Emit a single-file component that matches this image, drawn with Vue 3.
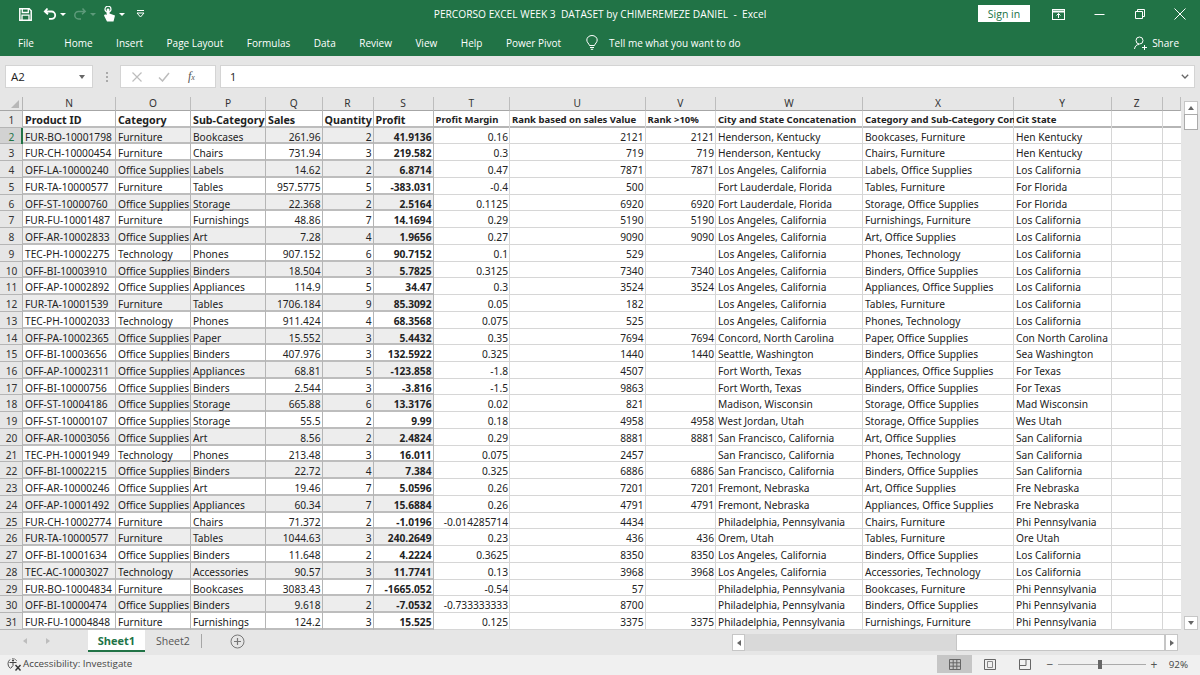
<script setup>
const tabs = ['Home','Insert','Page Layout','Formulas','Data','Review','View','Help','Power Pivot']
const letters = ['N','O','P','Q','R','S','T','U','V','W','X','Y','Z','']
const OS = 'Office Supplies', F = 'Furniture', T = 'Technology'
const H = 'Henderson, Kentucky', FL = 'Fort Lauderdale, Florida', LA = 'Los Angeles, California', FW = 'Fort Worth, Texas', SF = 'San Francisco, California', FR = 'Fremont, Nebraska', PH = 'Philadelphia, Pennsylvania'
const rows = [
['FUR-BO-10001798',F,'Bookcases','261.96','2','41.9136','0.16','2121','2121',H,'Bookcases, Furniture','Hen Kentucky'],
['FUR-CH-10000454',F,'Chairs','731.94','3','219.582','0.3','719','719',H,'Chairs, Furniture','Hen Kentucky'],
['OFF-LA-10000240',OS,'Labels','14.62','2','6.8714','0.47','7871','7871',LA,'Labels, Office Supplies','Los California'],
['FUR-TA-10000577',F,'Tables','957.5775','5','-383.031','-0.4','500','',FL,'Tables, Furniture','For Florida'],
['OFF-ST-10000760',OS,'Storage','22.368','2','2.5164','0.1125','6920','6920',FL,'Storage, Office Supplies','For Florida'],
['FUR-FU-10001487',F,'Furnishings','48.86','7','14.1694','0.29','5190','5190',LA,'Furnishings, Furniture','Los California'],
['OFF-AR-10002833',OS,'Art','7.28','4','1.9656','0.27','9090','9090',LA,'Art, Office Supplies','Los California'],
['TEC-PH-10002275',T,'Phones','907.152','6','90.7152','0.1','529','',LA,'Phones, Technology','Los California'],
['OFF-BI-10003910',OS,'Binders','18.504','3','5.7825','0.3125','7340','7340',LA,'Binders, Office Supplies','Los California'],
['OFF-AP-10002892',OS,'Appliances','114.9','5','34.47','0.3','3524','3524',LA,'Appliances, Office Supplies','Los California'],
['FUR-TA-10001539',F,'Tables','1706.184','9','85.3092','0.05','182','',LA,'Tables, Furniture','Los California'],
['TEC-PH-10002033',T,'Phones','911.424','4','68.3568','0.075','525','',LA,'Phones, Technology','Los California'],
['OFF-PA-10002365',OS,'Paper','15.552','3','5.4432','0.35','7694','7694','Concord, North Carolina','Paper, Office Supplies','Con North Carolina'],
['OFF-BI-10003656',OS,'Binders','407.976','3','132.5922','0.325','1440','1440','Seattle, Washington','Binders, Office Supplies','Sea Washington'],
['OFF-AP-10002311',OS,'Appliances','68.81','5','-123.858','-1.8','4507','',FW,'Appliances, Office Supplies','For Texas'],
['OFF-BI-10000756',OS,'Binders','2.544','3','-3.816','-1.5','9863','',FW,'Binders, Office Supplies','For Texas'],
['OFF-ST-10004186',OS,'Storage','665.88','6','13.3176','0.02','821','','Madison, Wisconsin','Storage, Office Supplies','Mad Wisconsin'],
['OFF-ST-10000107',OS,'Storage','55.5','2','9.99','0.18','4958','4958','West Jordan, Utah','Storage, Office Supplies','Wes Utah'],
['OFF-AR-10003056',OS,'Art','8.56','2','2.4824','0.29','8881','8881',SF,'Art, Office Supplies','San California'],
['TEC-PH-10001949',T,'Phones','213.48','3','16.011','0.075','2457','',SF,'Phones, Technology','San California'],
['OFF-BI-10002215',OS,'Binders','22.72','4','7.384','0.325','6886','6886',SF,'Binders, Office Supplies','San California'],
['OFF-AR-10000246',OS,'Art','19.46','7','5.0596','0.26','7201','7201',FR,'Art, Office Supplies','Fre Nebraska'],
['OFF-AP-10001492',OS,'Appliances','60.34','7','15.6884','0.26','4791','4791',FR,'Appliances, Office Supplies','Fre Nebraska'],
['FUR-CH-10002774',F,'Chairs','71.372','2','-1.0196','-0.014285714','4434','',PH,'Chairs, Furniture','Phi Pennsylvania'],
['FUR-TA-10000577',F,'Tables','1044.63','3','240.2649','0.23','436','436','Orem, Utah','Tables, Furniture','Ore Utah'],
['OFF-BI-10001634',OS,'Binders','11.648','2','4.2224','0.3625','8350','8350',LA,'Binders, Office Supplies','Los California'],
['TEC-AC-10003027',T,'Accessories','90.57','3','11.7741','0.13','3968','3968',LA,'Accessories, Technology','Los California'],
['FUR-BO-10004834',F,'Bookcases','3083.43','7','-1665.052','-0.54','57','',PH,'Bookcases, Furniture','Phi Pennsylvania'],
['OFF-BI-10000474',OS,'Binders','9.618','2','-7.0532','-0.733333333','8700','',PH,'Binders, Office Supplies','Phi Pennsylvania'],
['FUR-FU-10004848',F,'Furnishings','124.2','3','15.525','0.125','3375','3375',PH,'Furnishings, Furniture','Phi Pennsylvania'],
]
const heads = ['Product ID','Category','Sub-Category','Sales','Quantity','Profit','Profit Margin','Rank based on sales Value','Rank >10%','City and State Concatenation','Category and Sub-Category Concatenation','Cit State']
const isNum = i => i >= 3 && i <= 8
const cellClass = (r, i) => ({
  num: isNum(i),
  band: r % 2 === 0 && i < 6,
  dark: i < 6,
  strong: i === 5,
})
</script>

<template>
  <div class="app">
    <header class="titlebar">
      <div class="qat">
        <svg width="13" height="13" viewBox="0 0 13 13" class="q1"><path d="M.8.800h9.400l2 2v9.400H.800z" fill="none" stroke="#fff" stroke-width="1.500"/><path d="M3.300 1v3.500h6V1" fill="none" stroke="#fff" stroke-width="1.300"/><path d="M3 12V7.200h7V12" fill="none" stroke="#fff" stroke-width="1.300"/></svg>
        <svg width="14" height="14" viewBox="0 0 14 14" class="q2"><path d="M4.500 1.500L1.800 4.500 5 7.300M2 4.500h6.500a3.600 3.600 0 0 1 0 7.400H6" fill="none" stroke="#fff" stroke-width="1.800"/></svg>
        <span class="caret"></span>
        <svg width="14" height="14" viewBox="0 0 14 14" class="q3"><path d="M9.500 1.500l2.700 3L9 7.300M12 4.500H5.500a3.600 3.600 0 0 0 0 7.400H8" fill="none" stroke="#5d9a7a" stroke-width="1.500"/></svg>
        <span class="caret dim"></span>
        <svg width="13" height="17" viewBox="0 0 13 17" class="q4"><circle cx="5" cy="3.200" r="3" fill="none" stroke="#fff" stroke-width="1.200"/><path d="M3.600 4v5L2 8.200 1 9.500 4 15.500h6.500L12 9.500 6.500 7.500V4a1.450 1.450 0 0 0-2.900 0z" fill="#fff"/></svg>
        <span class="caret"></span>
        <svg width="9" height="8" viewBox="0 0 9 8" class="q5"><path d="M1 .5h7M1 3l3.500 4L8 3z" fill="none" stroke="#fff"/></svg>
      </div>
      <div class="title">PERCORSO EXCEL WEEK 3&nbsp; DATASET by CHIMEREMEZE DANIEL&nbsp; -&nbsp; Excel</div>
      <div class="winctl">
        <button class="signin">Sign in</button>
        <svg width="13" height="11" viewBox="0 0 13 11" class="w1"><rect x=".5" y=".5" width="12" height="10" fill="none" stroke="#fff"/><path d="M.5 2.500h12" stroke="#fff" stroke-width="2"/><path d="M6.500 9V4.500M4.500 6.500l2-2 2 2" stroke="#fff" fill="none"/></svg>
        <svg width="11" height="10" viewBox="0 0 11 10" class="w2"><path d="M.5 5.500h10" stroke="#fff"/></svg>
        <svg width="10" height="10" viewBox="0 0 10 10" class="w3"><path d="M2.500 2.500V.5h7v7h-2M.5 2.500h7v7h-7z" fill="none" stroke="#fff"/></svg>
        <svg width="12" height="12" viewBox="0 0 12 12" class="w4"><path d="M.5.500l11 11M11.500.500l-11 11" stroke="#fff"/></svg>
      </div>
    </header>

    <nav class="ribbon">
      <span class="file">File</span>
      <span v-for="t in tabs" :key="t" class="tab">{{ t }}</span>
      <svg width="12" height="15" viewBox="0 0 12 15" class="bulb"><path d="M3.500 10.500C3 8.500.8 7.500.8 5a5.200 4.500 0 0 1 10.400 0c0 2.500-2.200 3.500-2.700 5.500zM4 12.500h4M4.800 14.300h2.400" fill="none" stroke="#fff"/></svg>
      <span class="tell">Tell me what you want to do</span>
      <span class="grow"></span>
      <svg width="13" height="14" viewBox="0 0 13 14" class="shareicon"><circle cx="5.500" cy="4.500" r="3.500" fill="none" stroke="#fff"/><path d="M.5 13c.5-3 2-4.500 4.500-4.500M8 11.500h5M10.500 9v5" fill="none" stroke="#fff"/></svg>
      <span class="share">Share</span>
    </nav>

    <section class="formula">
      <div class="namebox"><span>A2</span><i class="ddown"></i></div>
      <div class="dots"><b></b><b></b><b></b></div>
      <div class="fbtns">
        <svg width="10" height="10" viewBox="0 0 10 10"><path d="M.5.500l9 9M9.500.500l-9 9" stroke="#bdbdbd" stroke-width="1.200"/></svg>
        <svg width="12" height="10" viewBox="0 0 12 10"><path d="M1 5.500l3.500 3.500L11 1" fill="none" stroke="#bdbdbd" stroke-width="1.500"/></svg>
        <span class="fx">f<sub>x</sub></span>
      </div>
      <div class="finput"><span>1</span><svg width="8" height="5" viewBox="0 0 8 5"><path d="M.8.800L4 4 7.200.800" fill="none" stroke="#666" stroke-width="1.300"/></svg></div>
    </section>

    <section class="sheet">
      <div class="grid">
        <div class="corner"><i></i></div>
        <div v-for="l in letters" :key="'h' + l" class="colhead">{{ l }}</div>

        <div class="rowhead">1</div>
        <div v-for="(h, i) in heads" :key="'t' + i" class="cell headcell" :class="{ dark: i < 6, big: i < 6 }">{{ h }}</div>
        <div class="cell headcell"></div>
        <div class="cell headcell last"></div>

        <template v-for="(row, r) in rows" :key="r">
          <div class="rowhead" :class="{ active: r === 0 }">{{ r + 2 }}</div>
          <div v-for="(c, i) in row" :key="i" class="cell" :class="cellClass(r, i)">{{ c }}</div>
          <div class="cell"></div>
          <div class="cell last"></div>
        </template>
      </div>
      <div class="vscroll">
        <div class="sbtn"><i class="up"></i></div>
        <div class="thumb"></div>
        <div class="track"></div>
        <div class="sbtn"><i class="down"></i></div>
      </div>
    </section>

    <section class="tabsbar">
      <div class="navarrows"><i class="l"></i><i class="r"></i></div>
      <div class="stab active">Sheet1</div>
      <div class="stab">Sheet2</div>
      <div class="sep"></div>
      <div class="plus"><svg width="15" height="15" viewBox="0 0 15 15"><circle cx="7.500" cy="7.500" r="6.500" fill="none" stroke="#777"/><path d="M7.500 4v7M4 7.500h7" stroke="#777" stroke-width="1.200"/></svg></div>
      <span class="grow"></span>
      <div class="hscroll">
        <div class="hbtn wide"><i class="l2"></i></div>
        <div class="htrack"></div>
        <div class="hthumb"></div>
        <div class="hbtn wide"><i class="r2"></i></div>
      </div>
    </section>

    <footer class="status">
      <svg width="16" height="15" viewBox="0 0 16 15" class="acc"><path d="M4 2.500A5.500 5.500 0 0 0 4 11" fill="none" stroke="#555"/><path d="M6 1.500A5.500 5.500 0 0 1 11 4" fill="none" stroke="#888"/><circle cx="7" cy="3.500" r="1.100" fill="#444"/><path d="M3.500 5.500h7M7 5.500v3M7 8.500l-2.500 3" fill="none" stroke="#444"/><path d="M9.500 8l5 5.500M14.500 8l-5 5.500" stroke="#333" stroke-width="1.400"/></svg>
      <span class="acctxt">Accessibility: Investigate</span>
      <span class="grow"></span>
      <div class="view on"><svg width="12" height="11" viewBox="0 0 12 11"><path d="M.5.500h11v10H.500zM.5 3.800h11M.5 7.200h11M4.200.500v10M7.800.500v10" fill="none" stroke="#666"/></svg></div>
      <div class="view"><svg width="12" height="11" viewBox="0 0 12 11"><path d="M.5.500h11v10H.500z" fill="none" stroke="#666"/><path d="M3.500 2.500h5v6h-5z" fill="none" stroke="#888"/></svg></div>
      <div class="view"><svg width="12" height="11" viewBox="0 0 12 11"><path d="M.5.500h11v10H.500zM.5 6.500h6.500V.500" fill="none" stroke="#666"/></svg></div>
      <div class="zoombar">
        <span class="zsign">−</span>
        <div class="slider"><i></i></div>
        <span class="zsign">+</span>
      </div>
      <span class="pct">92%</span>
    </footer>
  </div>
</template>

<style scoped>
.app { width: 1200px; height: 675px; display: flex; flex-direction: column; overflow: hidden; background: #e6e6e6; font-family: "Open Sans", "Noto Sans", sans-serif; color: #222; }
.grow { flex: 1; }
.titlebar { height: 28px; background: #217346; color: #fff; display: grid; grid-template-columns: 1fr auto 1fr; align-items: center; }
.qat { display: flex; align-items: center; }
.q1 { margin-left: 19px; }
.q2 { margin-left: 11px; }
.caret { width: 0; height: 0; flex: none; border: 3px solid transparent; border-top-color: #fff; border-bottom: 0; margin-left: 3px; }
.caret.dim { border-top-color: #5d9a7a; }
.q3 { margin-left: 7px; }
.q4 { margin-left: 7px; }
.q5 { margin-left: 11px; }
.title { font-size: 10.2px; white-space: nowrap; }
.winctl { display: flex; align-items: center; justify-content: flex-end; }
.signin { width: 52px; height: 17px; margin-top: -1px; border: 0; padding: 0; background: #fff; color: #217346; font: 10.5px "Open Sans", sans-serif; }
.w1 { margin-left: 22px; }
.w2 { margin-left: 29px; }
.w3 { margin-left: 30px; }
.w4 { margin-left: 29px; margin-right: 14px; }
.ribbon { height: 28px; background: #217346; color: #fff; display: flex; align-items: center; font-size: 10px; white-space: nowrap; padding-top: 1px; box-sizing: border-box; }
.file { margin-left: 18px; margin-right: 30.5px; }
.tab { margin-right: 23.5px; }
.bulb { margin-left: 1.5px; }
.tell { margin-left: 11px; }
.shareicon { margin-right: 5px; }
.share { margin-right: 21px; }
.formula { height: 41px; display: flex; align-items: center; box-sizing: border-box; padding: 0 5px 0 5px; background: #e6e6e6; }
.namebox { width: 88px; height: 23px; box-sizing: border-box; background: #fff; border: 1px solid #d4d4d4; display: flex; align-items: center; justify-content: space-between; padding: 0 7px 0 5px; font-size: 11.5px; }
.ddown { border: 3px solid transparent; border-top: 4px solid #666; border-bottom: 0; }
.dots { width: 27px; display: flex; flex-direction: column; align-items: center; gap: 2px; }
.dots b { width: 2px; height: 2px; background: #aaa; }
.fbtns { width: 96px; height: 23px; box-sizing: border-box; background: #fff; border: 1px solid #d4d4d4; display: flex; align-items: center; gap: 16px; padding-left: 11px; }
.fx { font: italic 12px "Liberation Serif", serif; color: #555; margin-left: 2px; }
.fx sub { font-size: 8px; vertical-align: baseline; }
.finput { flex: 1; margin-left: 4px; height: 23px; box-sizing: border-box; background: #fff; border: 1px solid #d4d4d4; display: flex; align-items: center; justify-content: space-between; padding: 0 5px 0 9px; font-size: 11px; }
.sheet { height: 533px; display: flex; background: #e6e6e6; }
.grid { width: 1181px; display: grid; grid-template-columns: 23px 93px 75px 75px 56.5px 51px 60px 76.5px 135.5px 70.5px 147px 151px 97.5px 51.5px 18px; grid-template-rows: 14px repeat(31, 16.74px); background: #fff; font-family: "Noto Sans", sans-serif; font-size: 10.2px; border-right: 1px solid #a6a6a6; box-sizing: border-box; align-self: flex-start; height: 533px; }
.corner { background: #e6e6e6; position: relative; border-right: 1px solid #b5b5b5; border-bottom: 1px solid #a6a6a6; }
.corner i { position: absolute; right: 3px; bottom: 2px; border: 4px solid transparent; border-right-color: #b7b7b7; border-bottom-color: #b7b7b7; }
.colhead { background: #e6e6e6; text-align: center; line-height: 13px; color: #333; border-right: 1px solid #bdbdbd; border-bottom: 1px solid #a6a6a6; box-sizing: border-box; }
.rowhead { background: #e6e6e6; text-align: center; line-height: 18px; color: #333; box-shadow: inset -1px -1px 0 #b5b5b5; overflow: hidden; }
.rowhead.active { background: #d2d2d2; color: #217346; box-shadow: inset -2px 0 0 #217346, inset 0 -1px 0 #b5b5b5; }
.cell { box-sizing: border-box; padding: 0 2px; line-height: 18px; white-space: nowrap; overflow: hidden; color: #222; background: #fff; box-shadow: inset -1px -1px 0 #d6d6d6; }
.cell.num { text-align: right; }
.cell.band { background: #ededed; }
.cell.dark { box-shadow: inset -1px 0 0 #b5b5b5, inset 0 -2px 0 #bdbdbd; }
.cell.strong { font-weight: 700; }
.cell.last { box-shadow: inset 0 -1px 0 #d6d6d6; }
.headcell { font-weight: 700; font-size: 9.5px; box-shadow: inset -1px 0 0 #d6d6d6, inset 0 -2px 0 #b5b5b5; }
.headcell.last { box-shadow: inset 0 -2px 0 #b5b5b5; }
.headcell.big { font-size: 10.7px; }
.vscroll { flex: 1; display: flex; flex-direction: column; padding: 4px 2px 0 3px; }
.sbtn { height: 14px; background: #fff; border: 1px solid #c6c6c6; box-sizing: border-box; display: flex; align-items: center; justify-content: center; }
.up { border: 3px solid transparent; border-bottom: 4px solid #666; border-top: 0; }
.down { border: 3px solid transparent; border-top: 4px solid #666; border-bottom: 0; }
.thumb { height: 16px; background: #fff; border: 1px solid #ababab; box-sizing: border-box; margin-top: -1px; }
.track { flex: 1; }
.tabsbar { height: 25px; display: flex; align-items: stretch; background: #e6e6e6; font-size: 10.5px; box-sizing: border-box; padding-bottom: 3px; }
.navarrows { width: 88px; display: flex; align-items: center; padding-left: 23px; gap: 19px; box-sizing: border-box; }
.navarrows i { border: 3px solid transparent; }
.navarrows .l { border-right: 4px solid #bdbdbd; border-left: 0; }
.navarrows .r { border-left: 4px solid #bdbdbd; border-right: 0; }
.stab { padding: 0 11px; display: flex; align-items: center; color: #555; }
.stab.active { width: 57px; justify-content: center; box-sizing: border-box; padding: 0; background: #fff; color: #217346; font-weight: 700; font-size: 11px; border-bottom: 2px solid #217346; }
.sep { width: 1px; margin: 4px 0; background: #a6a6a6; }
.plus { margin-left: 28px; display: flex; align-items: center; }
.hscroll { display: flex; align-items: stretch; margin: 4px 22px 1px 0; }
.hbtn { width: 13px; display: flex; align-items: center; justify-content: center; }
.hbtn.wide { background: #fff; border: 1px solid #c6c6c6; box-sizing: border-box; }
.htrack { width: 211px; background: #d9d9d9; }
.l2, .r2 { border: 3px solid transparent; }
.l2 { border-right: 4px solid #666; border-left: 0; }
.r2 { border-left: 4px solid #666; border-right: 0; }
.hthumb { width: 209px; background: #fff; border: 1px solid #c6c6c6; box-sizing: border-box; }
.status { height: 20px; display: flex; align-items: center; background: #f0f0f0; font-size: 9.8px; color: #444; white-space: nowrap; }
.acc { margin-left: 6px; margin-bottom: 2px; flex: none; }
.acctxt { margin-left: 1px; margin-bottom: 3px; }
.view { width: 35px; height: 18px; margin-bottom: 2px; display: flex; align-items: center; justify-content: center; }
.view.on { background: #c6c6c6; }
.zoombar { width: 116px; display: flex; align-items: center; margin-left: 2px; margin-bottom: 2px; }
.zsign { width: 12px; text-align: center; color: #555; font-size: 12px; }
.slider { flex: 1; height: 1px; background: #aaa; margin: 0 2px; position: relative; }
.slider i { position: absolute; left: 40px; top: -4px; width: 4px; height: 9px; background: #666; }
.pct { width: 40px; text-align: right; padding-right: 12px; box-sizing: border-box; margin-bottom: 2px; }
</style>
